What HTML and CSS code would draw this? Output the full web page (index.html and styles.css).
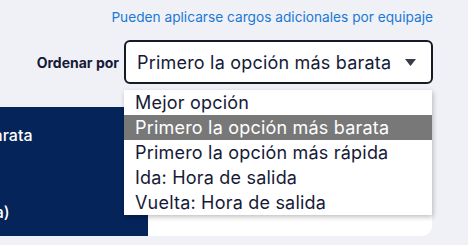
FILE: index.html
```html
<!DOCTYPE html>
<html>
<head>
<meta charset="utf-8">
<link rel="stylesheet" href="styles.css">
</head>
<body>

<div class="notice">
  <a href="#" class="notice-link">Pueden aplicarse cargos adicionales por equipaje</a>
</div>

<div class="sort-row">
  <span class="sort-label">Ordenar por</span>
  <div class="sort-select">
    <span class="sort-value">Primero la opción más barata</span>
    <svg class="sort-arrow" width="11" height="7" viewBox="0 0 11 7"><path d="M0 0 L11 0 L5.5 7 Z" fill="#383b4a"/></svg>
  </div>
  <ul class="sort-menu">
    <li>Mejor opción</li>
    <li class="active">Primero la opción más barata</li>
    <li>Primero la opción más rápida</li>
    <li>Ida: Hora de salida</li>
    <li>Vuelta: Hora de salida</li>
  </ul>
</div>

<div class="card">
  <div class="card-tab">
    <div class="tab-title">Más barata</div>
    <div class="tab-note">(ida y vuelta)</div>
  </div>
  <div class="card-body"></div>
</div>

</body>
</html>
```

FILE: styles.css
```css
body {
    margin: 0;
    background: #eff1f6;
    font-family: Inter, "Noto Sans", sans-serif;
    color: #161a36;
}

.notice {
    height: 28px;
    padding: 6px 35px 0 0;
    box-sizing: border-box;
    text-align: right;
}

.notice-link {
    color: #1a78d6;
    font-size: 13.7px;
    text-decoration: none;
}

.sort-row {
    position: relative;
    display: flex;
    justify-content: flex-end;
    align-items: center;
    gap: 5px;
    margin-top: 12px;
    padding-right: 35px;
}

.sort-label {
    font-size: 14px;
    font-weight: 700;
}

.sort-select {
    display: flex;
    align-items: center;
    justify-content: space-between;
    width: 309px;
    height: 44px;
    box-sizing: border-box;
    padding: 0 15px 0 11px;
    background: #fff;
    border: 2px solid #161a24;
    border-radius: 6px;
}

.sort-value {
    font-size: 18px;
    letter-spacing: 0.2px;
}

.sort-menu {
    position: absolute;
    top: 50px;
    right: 36px;
    width: 308px;
    margin: 0;
    padding: 0;
    list-style: none;
    background: #fff;
    box-shadow: 1px 2px 5px rgba(0, 0, 0, 0.25);
    z-index: 2;
}

.sort-menu li {
    height: 25px;
    line-height: 25px;
    padding-left: 11px;
    font-size: 18px;
    letter-spacing: 0.2px;
}

.sort-menu li.active {
    background: #787878;
    color: #fff;
}

.card {
    display: flex;
    width: 432px;
    height: 129px;
    margin-top: 23px;
}

.card-tab {
    width: 148px;
    background: #05245a;
    color: #fff;
    overflow: hidden;
    white-space: nowrap;
    font-size: 16px;
    font-weight: 500;
}

.tab-title {
    margin: 18px 0 0 -53px;
}

.tab-note {
    margin: 57px 0 0 -90px;
}

.card-body {
    flex: 1;
    background: #fff;
    border-radius: 0 0 10px 0;
}
```
